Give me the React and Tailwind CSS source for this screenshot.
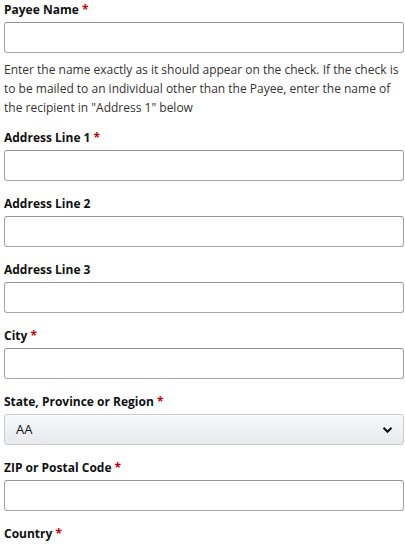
import React from 'react';

const Label = ({ children, required }) => (
  <label className="block text-[12px] font-bold leading-[19px] text-[#0f1111] mb-[3px]">
    {children}
    {required && <span className="text-[#c40000]"> *</span>}
  </label>
);

const TextInput = () => (
  <input
    type="text"
    className="block w-full h-[31px] rounded-[3px] border border-[#a6a6a6] border-t-[#949494] bg-white px-[7px] text-[13px] shadow-[inset_0_1px_0_rgba(255,255,255,0.5),0_1px_0_rgba(255,255,255,0.1)] outline-none"
  />
);

const Field = ({ label, required, children, className = 'mb-[13px]' }) => (
  <div className={className}>
    <Label required={required}>{label}</Label>
    {children || <TextInput />}
  </div>
);

export default function App() {
  return (
    <div className="w-[405px] h-[545px] overflow-hidden bg-white pl-[4px] pr-[1px] font-['Open_Sans',sans-serif] text-[#0f1111]">
      <div className="mb-[11px]">
        <Label required>Payee Name</Label>
        <TextInput />
        <p className="mt-[7px] text-[12px] leading-[19px] text-[#333]">
          Enter the name exactly as it should appear on the check. If the check is to be mailed to an individual other than the Payee, enter the name of the recipient in "Address 1" below
        </p>
      </div>

      <Field label="Address Line 1" required />
      <Field label="Address Line 2" />
      <Field label="Address Line 3" />
      <Field label="City" required />

      <Field label="State, Province or Region" required>
        <div className="flex h-[31px] items-center justify-between rounded-[3px] border border-[#c8cccc] bg-gradient-to-b from-[#f7f8fa] to-[#e7e9ec] pl-[11px] pr-[10px] shadow-[0_1px_0_rgba(255,255,255,0.6)_inset]">
          <span className="text-[13px] text-[#0f1111]">AA</span>
          <svg width="11" height="8" viewBox="0 0 11 8" fill="none">
            <path d="M1.5 1.8 L5.5 5.8 L9.5 1.8" stroke="#0f1111" strokeWidth="2" />
          </svg>
        </div>
      </Field>

      <Field label="ZIP or Postal Code" required />
      <Field label="Country" required className="" />
    </div>
  );
}
